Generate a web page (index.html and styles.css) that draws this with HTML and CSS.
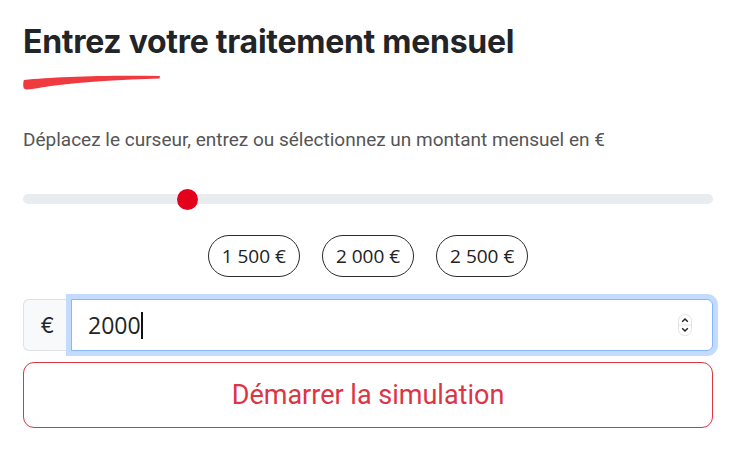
FILE: index.html
```html
<!DOCTYPE html>
<html lang="fr">
<head>
<meta charset="utf-8">
<link rel="stylesheet" href="styles.css">
</head>
<body>
<main class="panel">
  <h1 class="title">Entrez votre traitement mensuel</h1>
  <svg class="brush" width="140" height="16" viewBox="0 0 140 16" aria-hidden="true">
    <path d="M1 6 C30 3 80 1 137 2 L136.5 4.5 C100 5.5 60 8 32 11.5 C20 13 10 15 4 15.6 C1.5 15.6 0 14 0.2 11 C0.3 8.5 0.5 7 1 6 Z" fill="#ef3b3f"/>
  </svg>
  <p class="hint">Déplacez le curseur, entrez ou sélectionnez un montant mensuel en €</p>
  <div class="slider">
    <div class="track"></div>
    <div class="thumb"></div>
  </div>
  <div class="presets">
    <button class="pill">1 500 €</button>
    <button class="pill">2 000 €</button>
    <button class="pill">2 500 €</button>
  </div>
  <div class="input-group">
    <span class="prefix">€</span>
    <div class="field">
      <span class="value">2000</span><span class="caret"></span>
      <span class="spinner">
        <svg width="14" height="22" viewBox="0 0 14 22" aria-hidden="true">
          <rect x="0.5" y="0.5" width="13" height="21" rx="6" fill="#fff" stroke="#e3e3e3"/>
          <line x1="1" y1="11" x2="13" y2="11" stroke="#e3e3e3"/>
          <path d="M4.2 7.8 L7 5 L9.8 7.8" fill="none" stroke="#222" stroke-width="1.5"/>
          <path d="M4.2 14.2 L7 17 L9.8 14.2" fill="none" stroke="#222" stroke-width="1.5"/>
        </svg>
      </span>
    </div>
  </div>
  <button class="start">Démarrer la simulation</button>
</main>
</body>
</html>
```
FILE: styles.css
```css
* { box-sizing: border-box; }
html, body { margin: 0; background: #fff; }
body { font-family: "Inter", "Liberation Sans", sans-serif; }
.panel {
  padding: 22px 23px 0 23px;
  width: 736px;
}
.title {
  margin: 0;
  font-family: "Inter", sans-serif;
  font-weight: 700;
  font-size: 32px;
  line-height: 40px;
  color: #212529;
  letter-spacing: -0.28px;
}
.brush {
  display: block;
  margin-top: 12px;
}
.hint {
  margin: 39px 0 0 0;
  font-family: "Roboto", sans-serif;
  font-size: 19px;
  line-height: 22px;
  color: #555;
}
.slider {
  position: relative;
  margin-top: 37px;
  height: 22px;
  display: flex;
  align-items: center;
}
.track {
  flex: 1;
  height: 10px;
  border-radius: 5px;
  background: #e9ecef;
}
.thumb {
  position: absolute;
  left: 154px;
  top: 1px;
  width: 21px;
  height: 21px;
  border-radius: 50%;
  background: #e2001a;
}
.presets {
  display: flex;
  justify-content: center;
  gap: 22px;
  margin-top: 25px;
}
.pill {
  height: 42px;
  padding: 0 13px;
  border: 1.5px solid #2b2b2b;
  border-radius: 21px;
  background: #fff;
  font-family: "Open Sans", sans-serif;
  font-size: 19px;
  color: #222;
}
.input-group {
  display: flex;
  margin-top: 22px;
  height: 52px;
}
.prefix {
  width: 48px;
  display: flex;
  align-items: center;
  justify-content: center;
  background: #f8f9fa;
  border: 1px solid #dee2e6;
  border-right: none;
  border-radius: 6px 0 0 6px;
  font-size: 21px;
  color: #212529;
}
.field {
  flex: 1;
  display: flex;
  align-items: center;
  padding: 0 16px;
  border: 1px solid #86b7fe;
  border-radius: 0 6px 6px 0;
  box-shadow: 0 0 0 5px #c2dbfe;
  background: #fff;
  font-family: "Open Sans", sans-serif;
  font-size: 23px;
  color: #212529;
}
.caret {
  width: 2px;
  height: 27px;
  background: #111;
}
.spinner {
  margin-left: auto;
  display: flex;
  margin-right: 4px;
}
.start {
  display: block;
  width: 100%;
  margin-top: 11px;
  height: 66px;
  border: 1px solid #dc3545;
  border-radius: 11px;
  background: #fff;
  color: #dc3545;
  font-family: "Roboto", sans-serif;
  font-size: 27px;
}
```
